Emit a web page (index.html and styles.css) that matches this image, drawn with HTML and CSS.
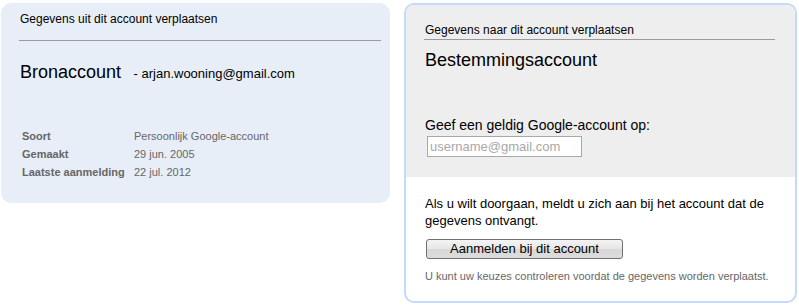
FILE: index.html
```html
<!DOCTYPE html>
<html lang="nl">
<head>
<meta charset="utf-8">
<title>Gegevens verplaatsen</title>
<link rel="stylesheet" href="styles.css">
</head>
<body>
<div class="page">
  <section class="source">
    <h2 class="section-title">Gegevens uit dit account verplaatsen</h2>
    <div class="account-head">
      <span class="account-name">Bronaccount</span>
      <span class="account-email">- arjan.wooning@gmail.com</span>
    </div>
    <table class="details">
      <tr><th>Soort</th><td>Persoonlijk Google-account</td></tr>
      <tr><th>Gemaakt</th><td>29 jun. 2005</td></tr>
      <tr><th>Laatste aanmelding</th><td>22 jul. 2012</td></tr>
    </table>
  </section>
  <section class="dest">
    <div class="dest-top">
      <h2 class="section-title dest-title">Gegevens naar dit account verplaatsen</h2>
      <div class="account-name dest-name">Bestemmingsaccount</div>
      <label class="prompt" for="user">Geef een geldig Google-account op:</label>
      <input id="user" class="user-input" type="text" placeholder="username@gmail.com">
    </div>
    <div class="dest-bottom">
      <p class="info">Als u wilt doorgaan, meldt u zich aan bij het account dat de gegevens ontvangt.</p>
      <button class="signin" type="button">Aanmelden bij dit account</button>
      <p class="note">U kunt uw keuzes controleren voordat de gegevens worden verplaatst.</p>
    </div>
  </section>
</div>
</body>
</html>
```
FILE: styles.css
```css
html, body {
  margin: 0;
  padding: 0;
  background: #ffffff;
}
body {
  font-family: "Liberation Sans", Arial, sans-serif;
  color: #000;
}
.page {
  display: flex;
  align-items: flex-start;
  gap: 14px;
  padding: 3px 0 0 1px;
}
.source {
  box-sizing: border-box;
  width: 389px;
  height: 200px;
  background: #e8eef8;
  border-radius: 10px;
  padding: 9px 9px 0 18px;
}
.section-title {
  margin: 0;
  font-size: 12px;
  line-height: 15px;
  font-weight: normal;
  padding-left: 1px;
}
.source .section-title {
  border-bottom: 1px solid #9a9a9a;
  padding-bottom: 13px;
}
.account-head {
  margin-top: 20px;
  line-height: 22px;
  padding-left: 1px;
}
.account-name {
  font-size: 18px;
}
.account-email {
  font-size: 13px;
  margin-left: 8px;
}
.details {
  border-collapse: collapse;
  margin-top: 42px;
  margin-left: 3px;
  font-size: 11px;
  color: #666;
}
.details th, .details td {
  padding: 0;
  height: 18px;
  line-height: 18px;
  text-align: left;
  vertical-align: top;
}
.details th {
  font-weight: bold;
  padding-right: 4px;
  width: 108px;
}
.dest {
  box-sizing: border-box;
  width: 393px;
  height: 300px;
  border: 2px solid #c3d9ff;
  border-radius: 10px;
  overflow: hidden;
  background: #fff;
}
.dest-top {
  background: #eeeeee;
  padding: 18px 20px 20px 18px;
  display: flex;
  flex-direction: column;
  align-items: flex-start;
}
.dest-title {
  align-self: stretch;
  border-bottom: 1px solid #9a9a9a;
  padding-bottom: 1px;
}
.dest-name {
  margin-top: 9px;
  line-height: 22px;
  padding-left: 1px;
}
.prompt {
  margin-top: 46px;
  font-size: 14px;
  line-height: 17px;
  padding-left: 1px;
}
.user-input {
  box-sizing: border-box;
  margin: 2px 0 0 3px;
  width: 155px;
  height: 21px;
  border: 1px solid #a9a9a9;
  background: #fff;
  padding: 0 2px;
  font-family: "Liberation Sans", Arial, sans-serif;
  font-size: 13px;
  outline: none;
}
.user-input::placeholder {
  color: #a8a8a8;
}
.dest-bottom {
  padding: 18px 20px 0 18px;
}
.info {
  margin: 0;
  font-size: 13px;
  line-height: 17px;
  padding-left: 1px;
}
.signin {
  display: block;
  box-sizing: border-box;
  margin: 10px 0 0 2px;
  width: 197px;
  height: 20px;
  padding: 0;
  border: 1px solid #707070;
  border-radius: 3px;
  background: linear-gradient(#f4f4f4, #e6e6e6 50%, #d8d8d8 51%, #dcdcdc);
  font-family: "Liberation Sans", Arial, sans-serif;
  font-size: 13px;
  line-height: 18px;
  color: #000;
}
.note {
  margin: 10px 0 0;
  font-size: 11px;
  line-height: 14px;
  color: #666;
  padding-left: 1px;
}
```
